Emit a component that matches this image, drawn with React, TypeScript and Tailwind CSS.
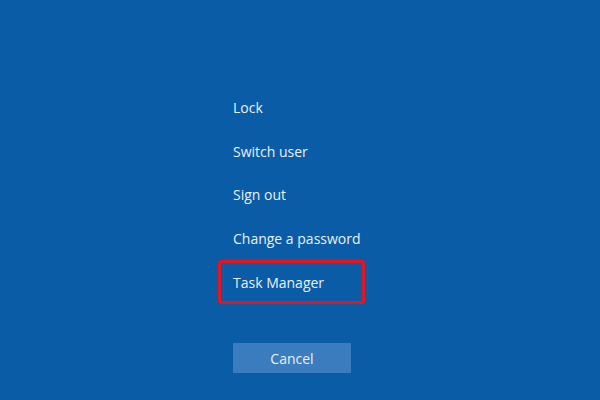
const items = ['Lock', 'Switch user', 'Sign out', 'Change a password'];

export default function App() {
  return (
    <div
      className="w-[600px] h-[400px] bg-[#0b5ca6] text-[#e8f0f8] flex flex-col pt-[86px] pl-[218px]"
      style={{ fontFamily: '"Segoe UI", "Open Sans", sans-serif' }}
    >
      {items.map((label) => (
        <div key={label} className="h-[43.5px] flex items-center px-[15px] text-[14px]">
          {label}
        </div>
      ))}
      <div className="h-[44px] w-[147px] flex items-center px-[12px] text-[14px] border-[3px] border-[#e5141f] rounded-[3px]">
        Task Manager
      </div>
      <button className="mt-[39px] ml-[15px] w-[118px] h-[30px] bg-[#3b7cbe] text-[14px] text-[#e8f0f8]">
        Cancel
      </button>
    </div>
  );
}
